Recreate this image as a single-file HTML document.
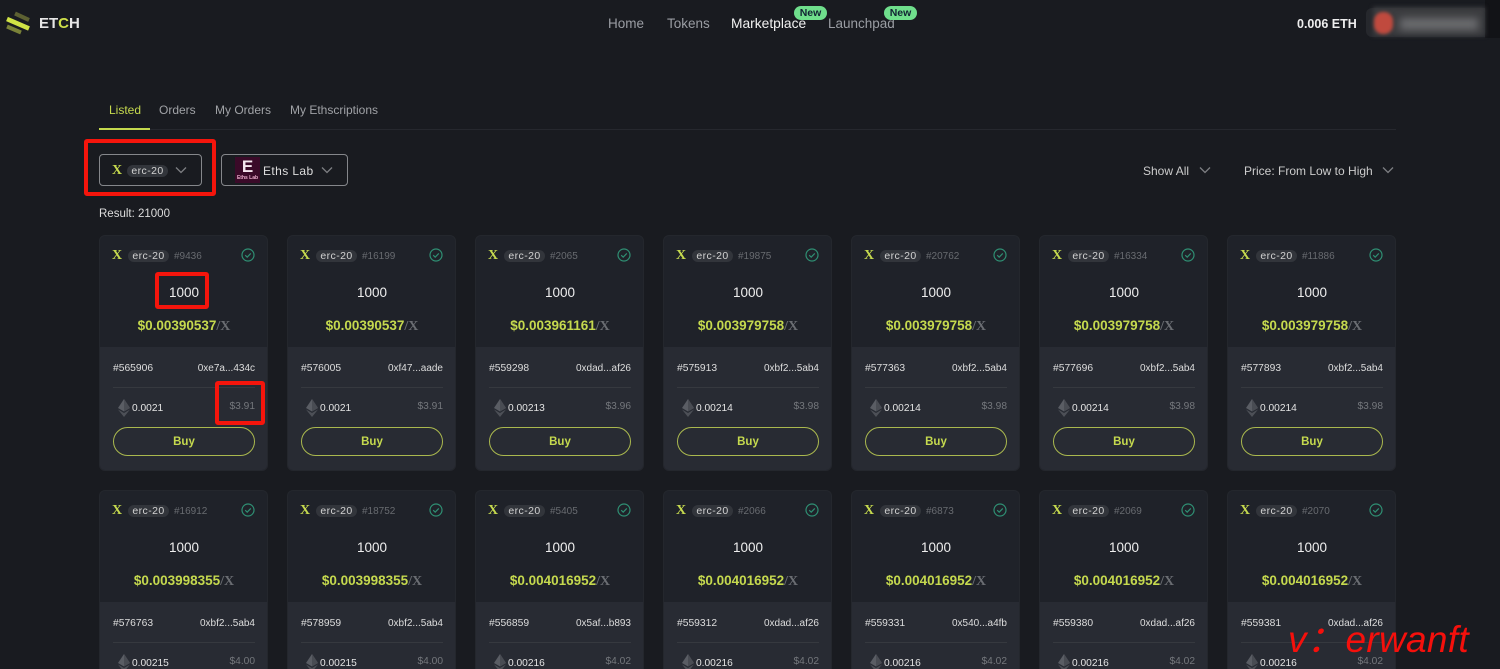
<!DOCTYPE html>
<html><head><meta charset="utf-8">
<style>
*{box-sizing:border-box;margin:0;padding:0}
html,body{width:1500px;height:669px;overflow:hidden;background:#191b20}
body{position:relative;font-family:"Liberation Sans","Noto Sans CJK SC",sans-serif;color:#ddd}
.a,.c,.c>*{position:absolute;white-space:nowrap}
.n{top:15px;font-size:13.5px;line-height:17px;color:#9a9da3}
.new{height:14px;width:33px;border-radius:7px;background:#6fdf8c;color:#123;font-size:10.5px;font-weight:bold;line-height:14px;text-align:center}
.t{top:103px;font-size:12px;line-height:15px;color:#a0a2a6}
.dd{top:154px;height:32px;border:1px solid #85878b;border-radius:4px}
.ch{fill:none;stroke:#7d7f83;stroke-width:1.3}
.x{font-family:"Liberation Serif",serif;font-weight:bold;color:#c5d94e;font-size:14px;line-height:14px}
.pill{background:#32353b;color:#d2d2d2;border-radius:6px;height:12px;width:41px;font-size:10.5px;line-height:12px;text-align:center;letter-spacing:.4px}
.c{width:169px;height:236px;border-radius:6px;overflow:hidden;background:#1f2229;border:1px solid #24272d}
.c2{height:179px;border-bottom:0;border-radius:6px 6px 0 0}
.c>.pill{left:28px;top:14px}
.c>.x{left:12px;top:13px}
.id{left:74px;top:15px;font-size:10px;line-height:12px;color:#686b70}
.ck{left:141px;top:12px}
.q{left:0;width:168px;text-align:center;top:48px;font-size:13.5px;line-height:18px;color:#eee}
.p{left:0;width:168px;text-align:center;top:81px;font-size:13.5px;line-height:18px;font-weight:bold;color:#c5d94e}
.p i{font-style:normal;font-weight:bold;color:#6a6d72;font-family:"Liberation Serif",serif;font-size:14px}
.b{left:0;top:111px;width:167px;height:124px;background:#282b33}
.c2 .b{height:68px}
.h{left:13px;top:126px;font-size:10.3px;line-height:13px;color:#ddd}
.ad{right:12px;top:126px;font-size:10px;line-height:13px;color:#ddd}
.l{left:13px;top:151px;width:142px;height:1px;background:#36393f}
.e{left:18px;top:163px}
.v{left:32px;top:166px;font-size:10.2px;line-height:13px;color:#e4e4e4}
.u{right:12px;top:164px;font-size:10.2px;line-height:13px;color:#74777c}
.buy{left:13px;top:191px;width:142px;height:29px;border:1px solid #aab84e;border-radius:15px;text-align:center;font-size:11.5px;font-weight:bold;line-height:28px;color:#c5d94e}
.r{border:4px solid #f5150c;border-radius:3px}
</style></head>
<body>
<svg class="a" style="left:0;top:0" width="40" height="40" viewBox="0 0 40 40" fill="none"><path d="M15 13.500L29 20" stroke="#5d6132" stroke-width="4"/><path d="M7 19L29 28.500" stroke="#d0e345" stroke-width="4.500"/><path d="M7 26.500L21 32.500" stroke="#7a8238" stroke-width="4"/></svg>
<div class="a" style="left:39px;top:15px;font-size:15px;line-height:18px;font-weight:bold;color:#e6e6e6">ET<span style="color:#cfe04a">C</span>H</div>
<div class="a n" style="left:608px">Home</div>
<div class="a n" style="left:667px">Tokens</div>
<div class="a n" style="left:731px;color:#f2f2f2;font-size:13.8px">Marketplace</div>
<div class="a n" style="left:828px">Launchpad</div>
<div class="a new" style="left:794px;top:6px">New</div>
<div class="a new" style="left:884px;top:6px">New</div>
<div class="a" style="left:1297px;top:17px;font-size:12.5px;line-height:15px;font-weight:bold;color:#eee">0.006 ETH</div>
<div class="a" style="left:1366px;top:8px;width:128px;height:29px;background:#26282d;border-radius:6px"></div>
<div class="a" style="left:1485px;top:0;width:15px;height:38px;background:#121317"></div>
<div class="a" style="left:1373px;top:7px;width:112px;height:29px;background:#3b3c3f;filter:blur(2px)"></div>
<div class="a" style="left:1400px;top:18px;width:78px;height:12px;background:#6a6b6e;filter:blur(4px)"></div>
<div class="a" style="left:1374px;top:12px;width:19px;height:22px;border-radius:9px;background:#c04a3e;filter:blur(1.5px)"></div>

<div class="a t" style="left:109px;color:#c5d94e">Listed</div>
<div class="a t" style="left:159px">Orders</div>
<div class="a t" style="left:215px">My Orders</div>
<div class="a t" style="left:290px">My Ethscriptions</div>
<div class="a" style="left:99px;top:129px;width:1297px;height:1px;background:#26282e"></div>
<div class="a" style="left:99px;top:128px;width:51px;height:2px;background:#c5d94e"></div>

<div class="a dd" style="left:99px;width:103px"></div>
<div class="a x" style="left:112px;top:164px">X</div>
<div class="a pill" style="left:127px;top:165px">erc-20</div>
<svg class="a" style="left:175px;top:166px" width="12" height="8"><path class="ch" d="M1 1.500l5 5 5-5"/></svg>
<div class="a dd" style="left:221px;width:127px"></div>
<div class="a" style="left:235px;top:157px;width:25px;height:26px;background:#3a0a28"></div>
<div class="a" style="left:235px;top:157px;width:25px;text-align:center;font-size:17px;line-height:19px;font-weight:bold;color:#f4e6ee">E</div>
<div class="a" style="left:235px;top:175px;width:25px;text-align:center;font-size:5px;line-height:6px;font-weight:bold;color:#f0b0d0">Eths Lab</div>
<div class="a" style="left:263px;top:164px;font-size:12px;line-height:15px;letter-spacing:.4px;color:#ddd">Eths Lab</div>
<svg class="a" style="left:321px;top:166px" width="12" height="8"><path class="ch" d="M1 1.500l5 5 5-5"/></svg>
<div class="a" style="left:1143px;top:164px;font-size:12px;line-height:15px;color:#ccc">Show All</div>
<svg class="a" style="left:1199px;top:166px" width="12" height="8"><path class="ch" d="M1 1.500l5 5 5-5"/></svg>
<div class="a" style="left:1244px;top:164px;font-size:12px;line-height:15px;color:#ccc">Price: From Low to High</div>
<svg class="a" style="left:1382px;top:166px" width="12" height="8"><path class="ch" d="M1 1.500l5 5 5-5"/></svg>
<div class="a" style="left:99px;top:207px;font-size:11.5px;line-height:15px;color:#ddd">Result: 21000</div>

<svg width="0" height="0" style="position:absolute"><defs>
<symbol id="ck" viewBox="0 0 14 14"><circle cx="7" cy="7" r="6" fill="none" stroke="#2f8f73" stroke-width="1.2"/><path d="M4.200 7.200l2 2 3.600-3.800" fill="none" stroke="#2f8f73" stroke-width="1.2"/></symbol>
<symbol id="eth" viewBox="0 0 12 18"><path d="M6 0L0 9l6 3.500L12 9z" fill="#5a5d64"/><path d="M6 0v12.500L12 9z" fill="#494c53"/><path d="M0 10.500L6 18l6-7.500-6 3.500z" fill="#4d5057"/></symbol>
</defs></svg>

<div class="c" style="left:99px;top:235px"><div class="x">X</div><div class="pill">erc-20</div><div class="id">#9436</div><svg class="ck" width="14" height="14"><use href="#ck"/></svg><div class="q">1000</div><div class="p">$0.00390537<i>/X</i></div><div class="b"></div><div class="h">#565906</div><div class="ad">0xe7a...434c</div><div class="l"></div><svg class="e" width="12" height="18"><use href="#eth"/></svg><div class="v">0.0021</div><div class="u">$3.91</div><div class="buy">Buy</div></div>
<div class="c" style="left:287px;top:235px"><div class="x">X</div><div class="pill">erc-20</div><div class="id">#16199</div><svg class="ck" width="14" height="14"><use href="#ck"/></svg><div class="q">1000</div><div class="p">$0.00390537<i>/X</i></div><div class="b"></div><div class="h">#576005</div><div class="ad">0xf47...aade</div><div class="l"></div><svg class="e" width="12" height="18"><use href="#eth"/></svg><div class="v">0.0021</div><div class="u">$3.91</div><div class="buy">Buy</div></div>
<div class="c" style="left:475px;top:235px"><div class="x">X</div><div class="pill">erc-20</div><div class="id">#2065</div><svg class="ck" width="14" height="14"><use href="#ck"/></svg><div class="q">1000</div><div class="p">$0.003961161<i>/X</i></div><div class="b"></div><div class="h">#559298</div><div class="ad">0xdad...af26</div><div class="l"></div><svg class="e" width="12" height="18"><use href="#eth"/></svg><div class="v">0.00213</div><div class="u">$3.96</div><div class="buy">Buy</div></div>
<div class="c" style="left:663px;top:235px"><div class="x">X</div><div class="pill">erc-20</div><div class="id">#19875</div><svg class="ck" width="14" height="14"><use href="#ck"/></svg><div class="q">1000</div><div class="p">$0.003979758<i>/X</i></div><div class="b"></div><div class="h">#575913</div><div class="ad">0xbf2...5ab4</div><div class="l"></div><svg class="e" width="12" height="18"><use href="#eth"/></svg><div class="v">0.00214</div><div class="u">$3.98</div><div class="buy">Buy</div></div>
<div class="c" style="left:851px;top:235px"><div class="x">X</div><div class="pill">erc-20</div><div class="id">#20762</div><svg class="ck" width="14" height="14"><use href="#ck"/></svg><div class="q">1000</div><div class="p">$0.003979758<i>/X</i></div><div class="b"></div><div class="h">#577363</div><div class="ad">0xbf2...5ab4</div><div class="l"></div><svg class="e" width="12" height="18"><use href="#eth"/></svg><div class="v">0.00214</div><div class="u">$3.98</div><div class="buy">Buy</div></div>
<div class="c" style="left:1039px;top:235px"><div class="x">X</div><div class="pill">erc-20</div><div class="id">#16334</div><svg class="ck" width="14" height="14"><use href="#ck"/></svg><div class="q">1000</div><div class="p">$0.003979758<i>/X</i></div><div class="b"></div><div class="h">#577696</div><div class="ad">0xbf2...5ab4</div><div class="l"></div><svg class="e" width="12" height="18"><use href="#eth"/></svg><div class="v">0.00214</div><div class="u">$3.98</div><div class="buy">Buy</div></div>
<div class="c" style="left:1227px;top:235px"><div class="x">X</div><div class="pill">erc-20</div><div class="id">#11886</div><svg class="ck" width="14" height="14"><use href="#ck"/></svg><div class="q">1000</div><div class="p">$0.003979758<i>/X</i></div><div class="b"></div><div class="h">#577893</div><div class="ad">0xbf2...5ab4</div><div class="l"></div><svg class="e" width="12" height="18"><use href="#eth"/></svg><div class="v">0.00214</div><div class="u">$3.98</div><div class="buy">Buy</div></div>

<div class="c c2" style="left:99px;top:490px"><div class="x">X</div><div class="pill">erc-20</div><div class="id">#16912</div><svg class="ck" width="14" height="14"><use href="#ck"/></svg><div class="q">1000</div><div class="p">$0.003998355<i>/X</i></div><div class="b"></div><div class="h">#576763</div><div class="ad">0xbf2...5ab4</div><div class="l"></div><svg class="e" width="12" height="18"><use href="#eth"/></svg><div class="v">0.00215</div><div class="u">$4.00</div></div>
<div class="c c2" style="left:287px;top:490px"><div class="x">X</div><div class="pill">erc-20</div><div class="id">#18752</div><svg class="ck" width="14" height="14"><use href="#ck"/></svg><div class="q">1000</div><div class="p">$0.003998355<i>/X</i></div><div class="b"></div><div class="h">#578959</div><div class="ad">0xbf2...5ab4</div><div class="l"></div><svg class="e" width="12" height="18"><use href="#eth"/></svg><div class="v">0.00215</div><div class="u">$4.00</div></div>
<div class="c c2" style="left:475px;top:490px"><div class="x">X</div><div class="pill">erc-20</div><div class="id">#5405</div><svg class="ck" width="14" height="14"><use href="#ck"/></svg><div class="q">1000</div><div class="p">$0.004016952<i>/X</i></div><div class="b"></div><div class="h">#556859</div><div class="ad">0x5af...b893</div><div class="l"></div><svg class="e" width="12" height="18"><use href="#eth"/></svg><div class="v">0.00216</div><div class="u">$4.02</div></div>
<div class="c c2" style="left:663px;top:490px"><div class="x">X</div><div class="pill">erc-20</div><div class="id">#2066</div><svg class="ck" width="14" height="14"><use href="#ck"/></svg><div class="q">1000</div><div class="p">$0.004016952<i>/X</i></div><div class="b"></div><div class="h">#559312</div><div class="ad">0xdad...af26</div><div class="l"></div><svg class="e" width="12" height="18"><use href="#eth"/></svg><div class="v">0.00216</div><div class="u">$4.02</div></div>
<div class="c c2" style="left:851px;top:490px"><div class="x">X</div><div class="pill">erc-20</div><div class="id">#6873</div><svg class="ck" width="14" height="14"><use href="#ck"/></svg><div class="q">1000</div><div class="p">$0.004016952<i>/X</i></div><div class="b"></div><div class="h">#559331</div><div class="ad">0x540...a4fb</div><div class="l"></div><svg class="e" width="12" height="18"><use href="#eth"/></svg><div class="v">0.00216</div><div class="u">$4.02</div></div>
<div class="c c2" style="left:1039px;top:490px"><div class="x">X</div><div class="pill">erc-20</div><div class="id">#2069</div><svg class="ck" width="14" height="14"><use href="#ck"/></svg><div class="q">1000</div><div class="p">$0.004016952<i>/X</i></div><div class="b"></div><div class="h">#559380</div><div class="ad">0xdad...af26</div><div class="l"></div><svg class="e" width="12" height="18"><use href="#eth"/></svg><div class="v">0.00216</div><div class="u">$4.02</div></div>
<div class="c c2" style="left:1227px;top:490px"><div class="x">X</div><div class="pill">erc-20</div><div class="id">#2070</div><svg class="ck" width="14" height="14"><use href="#ck"/></svg><div class="q">1000</div><div class="p">$0.004016952<i>/X</i></div><div class="b"></div><div class="h">#559381</div><div class="ad">0xdad...af26</div><div class="l"></div><svg class="e" width="12" height="18"><use href="#eth"/></svg><div class="v">0.00216</div><div class="u">$4.02</div></div>

<div class="a r" style="left:84px;top:139px;width:132px;height:57px"></div>
<div class="a r" style="left:155px;top:272px;width:54px;height:37px"></div>
<div class="a r" style="left:215px;top:381px;width:50px;height:44px"></div>
<div class="a" style="left:1288px;top:618px;height:44px;font-size:37px;line-height:44px;font-style:italic;color:#f5100c">v：<span style="margin-left:2px;letter-spacing:.3px">erwanft</span></div>
</body></html>
